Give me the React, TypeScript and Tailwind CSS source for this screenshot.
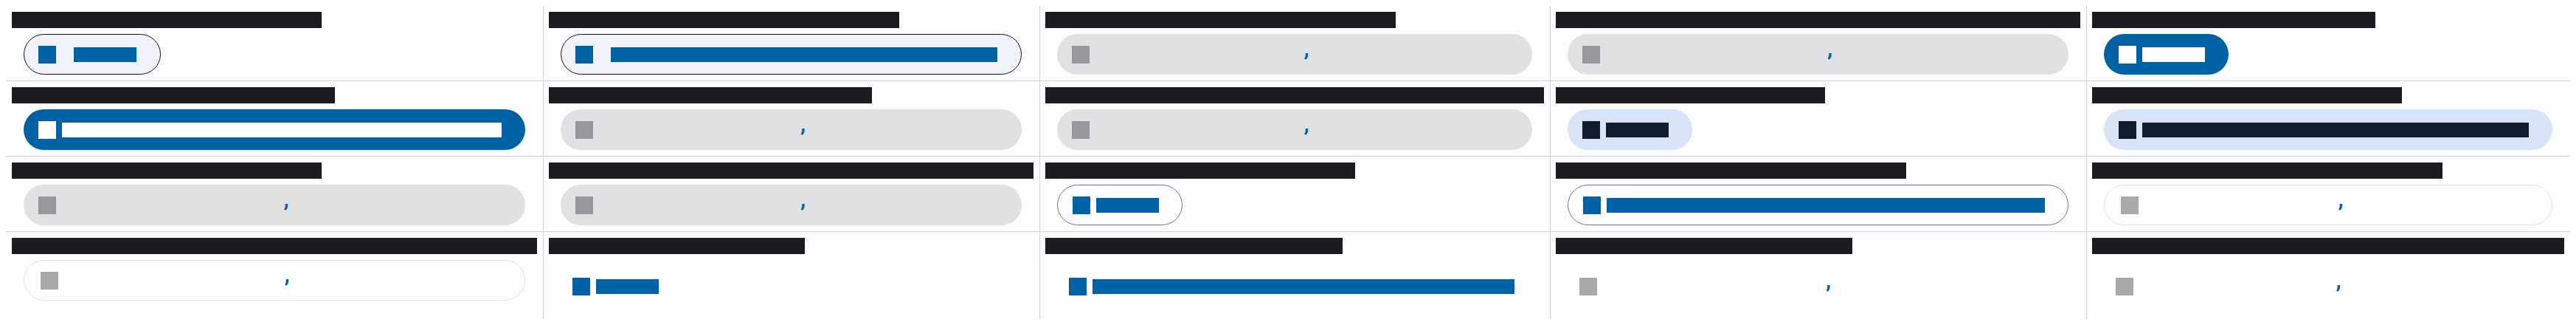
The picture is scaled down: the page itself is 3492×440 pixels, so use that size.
type Variante =
  | 'contorno'
  | 'gris'
  | 'relleno'
  | 'tonal'
  | 'contornoGris'
  | 'tenue'
  | 'texto'
  | 'textoApagado';

interface Celda {
  titulo: string; // clase de ancho del bloque de título
  variante: Variante;
  ancho?: boolean; // el botón ocupa todo el ancho de la celda
}

const FILAS: Celda[][] = [
  [
    { titulo: 'w-[420px]', variante: 'contorno' },
    { titulo: 'w-[475px]', variante: 'contorno', ancho: true },
    { titulo: 'w-[475px]', variante: 'gris', ancho: true },
    { titulo: 'w-full', variante: 'gris', ancho: true },
    { titulo: 'w-[384px]', variante: 'relleno' },
  ],
  [
    { titulo: 'w-[438px]', variante: 'relleno', ancho: true },
    { titulo: 'w-[438px]', variante: 'gris', ancho: true },
    { titulo: 'w-full', variante: 'gris', ancho: true },
    { titulo: 'w-[365px]', variante: 'tonal' },
    { titulo: 'w-[420px]', variante: 'tonal', ancho: true },
  ],
  [
    { titulo: 'w-[420px]', variante: 'gris', ancho: true },
    { titulo: 'w-full', variante: 'gris', ancho: true },
    { titulo: 'w-[420px]', variante: 'contornoGris' },
    { titulo: 'w-[475px]', variante: 'contornoGris', ancho: true },
    { titulo: 'w-[475px]', variante: 'tenue', ancho: true },
  ],
  [
    { titulo: 'w-full', variante: 'tenue', ancho: true },
    { titulo: 'w-[347px]', variante: 'texto' },
    { titulo: 'w-[403px]', variante: 'texto', ancho: true },
    { titulo: 'w-[402px]', variante: 'textoApagado', ancho: true },
    { titulo: 'w-full', variante: 'textoApagado', ancho: true },
  ],
];

/** La única letra visible de las etiquetas apagadas: una coma azul. */
function Coma() {
  return (
    <div className="flex flex-1 justify-center pl-5">
      <span className="mb-[18px] font-['Roboto',sans-serif] text-[32px] font-medium leading-none text-[#0061a4]">
        ,
      </span>
    </div>
  );
}

function Boton({ variante, ancho }: { variante: Variante; ancho?: boolean }) {
  const lugar = ancho ? 'mx-4 self-stretch' : 'ml-4 self-start';
  const caja = `flex h-[55px] shrink-0 items-center rounded-full ${lugar}`;
  const etiqueta = ancho ? 'h-5 flex-1' : 'h-5 w-[85px]';

  switch (variante) {
    case 'contorno':
      return (
        <div className={`${caja} mt-2 gap-6 border border-[#111114] bg-[#eff2f9] pl-[19px] pr-8`}>
          <span className="size-6 shrink-0 bg-[#0061a4]" />
          <span className={`${etiqueta} bg-[#0061a4]`} />
        </div>
      );
    case 'relleno':
      return (
        <div className={`${caja} mt-2 gap-2 bg-[#0061a4] pl-5 pr-8`}>
          <span className="size-6 shrink-0 bg-white" />
          <span className={`${etiqueta} bg-white`} />
        </div>
      );
    case 'tonal':
      return (
        <div className={`${caja} mt-2 gap-2 bg-[#d7e3f7] pl-5 pr-8`}>
          <span className="size-6 shrink-0 bg-[#101c2b]" />
          <span className={`${etiqueta} bg-[#101c2b]`} />
        </div>
      );
    case 'contornoGris':
      return (
        <div className={`${caja} mt-2 gap-2 border border-[#74777f] pl-5 pr-[31px]`}>
          <span className="size-6 shrink-0 bg-[#0061a4]" />
          <span className={`${etiqueta} bg-[#0061a4]`} />
        </div>
      );
    case 'gris':
      return (
        <div className={`${caja} mt-2 bg-[#e1e1e4] pl-5 pr-8`}>
          <span className="size-6 shrink-0 bg-[#98989c]" />
          <Coma />
        </div>
      );
    case 'tenue':
      return (
        <div className={`${caja} mt-2 border border-[#e2e2e5] pl-[22px] pr-8`}>
          <span className="size-6 shrink-0 bg-[#a9a9ab]" />
          <Coma />
        </div>
      );
    case 'texto':
      return (
        <div className={`${caja} mt-4 gap-2 pl-4 pr-6`}>
          <span className="size-6 shrink-0 bg-[#0061a4]" />
          <span className={`${etiqueta} bg-[#0061a4]`} />
        </div>
      );
    case 'textoApagado':
      return (
        <div className={`${caja} mt-4 pl-4 pr-8`}>
          <span className="size-6 shrink-0 bg-[#a9a9ab]" />
          <Coma />
        </div>
      );
  }
}

export default function App() {
  return (
    <div className="h-[440px] bg-[#fdfcff] p-2 font-['Roboto',sans-serif]">
      <div className="grid h-full grid-cols-[728px_673px_692px_727px_1fr] grid-rows-[auto_auto_auto_1fr]">
        {FILAS.map((fila, fi) =>
          fila.map((celda, ci) => (
            <div
              key={`${fi}-${ci}`}
              className={`flex flex-col border-[#d3d3d6] pt-2 pr-2 pb-2 ${ci > 0 ? 'border-l pl-[7px]' : 'pl-2'} ${fi < 3 ? 'border-b' : ''}`}
            >
              <div className={`h-[22px] shrink-0 bg-[#1b1c1f] ${celda.titulo}`} />
              <Boton variante={celda.variante} ancho={celda.ancho} />
            </div>
          )),
        )}
      </div>
    </div>
  );
}
